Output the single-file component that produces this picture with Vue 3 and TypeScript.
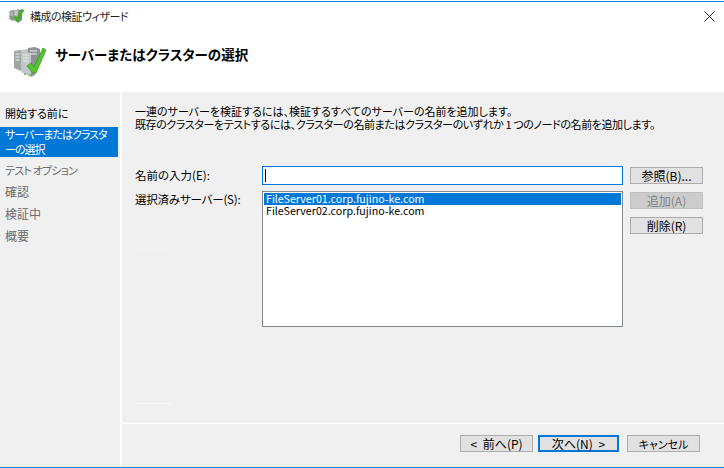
<script setup lang="ts">
const steps = [
  { label: '開始する前に', cls: 'normal' },
  { label: 'サーバーまたはクラスタ\nーの選択', cls: 'active' },
  { label: 'テスト オプション', cls: 'muted kana' },
  { label: '確認', cls: 'muted' },
  { label: '検証中', cls: 'muted' },
  { label: '概要', cls: 'muted' },
]
const servers = ['FileServer01.corp.fujino-ke.com', 'FileServer02.corp.fujino-ke.com']
</script>

<template>
  <div class="win">
    <div class="edge"></div>
    <div class="titlebar">
      <svg class="ti" width="16" height="16" viewBox="0 0 32 32">
        <path d="M1 6l9-2v22l-9-3z" fill="#8f9696"/>
        <path d="M10 4l8-1v25l-8-2z" fill="#b4b9b9"/>
        <path d="M18 3l8 1v20l-8 6z" fill="#7f8787"/>
        <path d="M3 10h5M3 14h5M12 8h4M12 12h4M20 9h4" stroke="#e8eaea" stroke-width="1.5"/>
        <path d="M11 17l5 7L28 3" fill="none" stroke="#3fb31f" stroke-width="6"/>
      </svg>
      <span class="ttext">構成の検証ウィザード</span>
      <svg class="close" width="11" height="11" viewBox="0 0 11 11"><path d="M0.5 0.5l10 10M10.5 0.5l-10 10" stroke="#222" fill="none"/></svg>
    </div>
    <div class="header">
      <svg class="hi" width="32" height="30" viewBox="0 0 32 30">
        <path d="M0 4l7-1v21l-7-3z" fill="#a0a6a6"/>
        <path d="M7 3l7-1 0 4 3 0v24l-10-5z" fill="#c2c6c6"/>
        <path d="M14 1l7-1 5 2v6l-5 20-4 2V6l-3 0z" fill="#8c9494"/>
        <path d="M1.5 7h4M1.5 10h4M1.5 13h4M9 8h6M9 11h6M9 14h6M16 4h7M16 7h7" stroke="#eceeee" stroke-width="1.2"/>
        <circle cx="11" cy="27" r="1" fill="#5cc23a"/>
        <circle cx="16" cy="28" r="1" fill="#5cc23a"/>
        <path d="M13 19l4-3 3 4L29 1l3 2-10 23h-3z" fill="#54c62e" stroke="#2f8f1a" stroke-width="0.7"/>
      </svg>
      <h1 class="htext">サーバーまたはクラスターの選択</h1>
    </div>
    <div class="body">
      <nav class="nav">
        <div v-for="s in steps" :key="s.label" class="step" :class="s.cls">{{ s.label }}</div>
      </nav>
      <div class="main">
        <section class="content">
          <p class="intro"><span class="l1">一連のサーバーを検証するには、検証するすべてのサーバーの名前を追加します。</span><span class="l2">既存のクラスターをテストするには、クラスターの名前またはクラスターのいずれか 1 つのノードの名前を追加します。</span></p>
          <div class="form">
            <div class="labels">
              <label>名前の入力(E):</label>
              <label class="tight">選択済みサーバー(S):</label>
            </div>
            <div class="fields">
              <div class="input"><span class="caret"></span></div>
              <div class="list">
                <div v-for="(s, i) in servers" :key="s" class="srv" :class="{ sel: i === 0 }">{{ s }}</div>
              </div>
            </div>
            <div class="btns">
              <button class="btn">参照(B)...</button>
              <button class="btn dis">追加(A)</button>
              <button class="btn">削除(R)</button>
            </div>
          </div>
          <div class="ghost g1"></div>
          <div class="ghost g2"></div>
        </section>
        <footer class="footer">
          <button class="btn arrow">&lt; 前へ(P)</button>
          <button class="btn def arrow">次へ(N) &gt;</button>
          <button class="btn cancel">キャンセル</button>
        </footer>
      </div>
    </div>
    <div class="edge-b"></div>
  </div>
</template>

<style>
html, body { margin: 0; padding: 0; background: #fff; overflow: hidden; }
</style>

<style scoped>
.win { width: 724px; height: 468px; display: flex; flex-direction: column; background: #fff; font-family: "Noto Sans CJK JP", "Liberation Sans", sans-serif; font-size: 12px; font-feature-settings: "palt"; color: #000; overflow: hidden; }
.edge { height: 1px; border-top: 1px solid #fff; background: #1883d7; flex: none; }
.titlebar { height: 28px; flex: none; display: flex; align-items: center; padding: 0 9px 0 9px; }
.ti { margin-right: 5px; }
.ttext { font-size: 11px; letter-spacing: -0.5px; color: #222; }
.close { margin-left: auto; }
.header { flex: none; display: flex; align-items: flex-start; padding: 14px 0 0 14px; box-sizing: border-box; border-bottom: 2px solid #fff; height: 62px; }
.hi { margin: 3px 9px 0 0; }
.htext { margin: 0; font-size: 13.5px; font-weight: 700; line-height: 20px; }
.body { flex: 1; min-height: 0; display: flex; background: #f0f0f0; }
.nav { width: 120px; flex: none; box-sizing: content-box; padding-top: 10px; border-right: 2px solid #fff; }
.step { padding-left: 5px; line-height: 22px; height: 22px; white-space: nowrap; }
.step.normal { font-size: 11px; }
.step.active { background: #0078d7; color: #fff; height: 30px; font-size: 11px; letter-spacing: -1px; line-height: 15px; white-space: pre-line; width: 113px; margin: 3px 0 2px; }
.step.muted { color: #6d6d6d; }
.step.kana { font-size: 11px; letter-spacing: -0.8px; }
.main { flex: 1; display: flex; flex-direction: column; min-width: 0; }
.content { flex: 1; padding: 13px 0 0 13px; border-bottom: 1px solid #fff; position: relative; }
.intro { margin: 0 0 35px; line-height: 13px; font-size: 11px; white-space: nowrap; }
.l1, .l2 { display: block; }
.l2 { letter-spacing: -0.4px; }
.form { display: flex; }
.labels { width: 127px; flex: none; display: flex; flex-direction: column; gap: 6px; font-size: 11.5px; }
.labels label { line-height: 18px; }
.labels .tight { letter-spacing: -0.2px; }
.fields { width: 361px; flex: none; display: flex; flex-direction: column; gap: 6px; }
.input { height: 17px; border: 1px solid #0078d7; background: #fff; display: flex; align-items: center; padding-left: 2px; }
.caret { width: 1px; height: 13px; background: #000; }
.list { height: 132px; border: 1px solid #82878c; background: #fff; padding: 1px; }
.srv { font-size: 10.7px; font-feature-settings: normal; line-height: 12px; height: 12px; padding-left: 2px; white-space: nowrap; }
.srv.sel { background: #0078d7; color: #fff; }
.btns { margin-left: 7px; padding-top: 1px; display: flex; flex-direction: column; gap: 8px; }
.btn { width: 73px; height: 17px; box-sizing: border-box; padding: 0; background: #e1e1e1; border: 1px solid #adadad; font: inherit; font-size: 12px; font-feature-settings: "palt"; line-height: 14px; color: #000; }
.btn.arrow { word-spacing: 3px; }
.btn.dis { background: #ccc; border-color: #bfbfbf; color: #838383; }
.footer { height: 43px; box-sizing: border-box; flex: none; display: flex; align-items: flex-start; padding: 11px 0 0 338px; gap: 5px; }
.btn.def { width: 81px; border: 2px solid #0078d7; }
.btn.cancel { margin-left: 3px; font-size: 11px; }
.edge-b { height: 1px; background: #1883d7; flex: none; }
.ghost { position: absolute; left: 14px; width: 35px; height: 1px; }
.g1 { top: 157px; background: #f4f4f4; }
.g2 { top: 311px; background: #fafafa; }
</style>
